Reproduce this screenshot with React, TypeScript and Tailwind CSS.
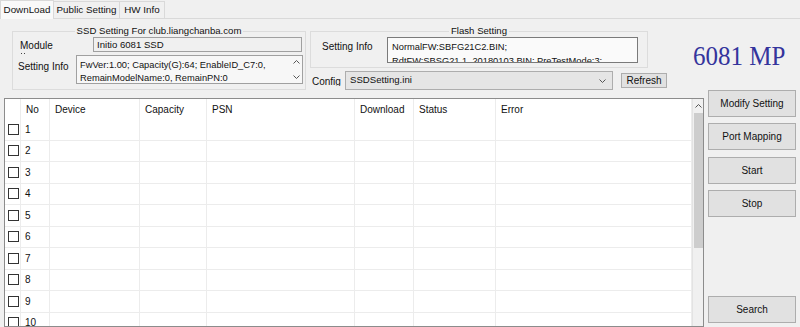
import React from "react";

const cols = "grid grid-cols-[16px_29px_90px_67px_148px_59px_82px_196px]";

function ChevronUp({ className = "" }: { className?: string }) {
  return (
    <svg width="7" height="4" viewBox="0 0 7 4" className={className}>
      <path d="M0.5 3.5 L3.5 0.5 L6.5 3.5" fill="none" stroke="#555" strokeWidth="1" />
    </svg>
  );
}
function ChevronDown({ className = "" }: { className?: string }) {
  return (
    <svg width="7" height="4" viewBox="0 0 7 4" className={className}>
      <path d="M0.5 0.5 L3.5 3.5 L6.5 0.5" fill="none" stroke="#555" strokeWidth="1" />
    </svg>
  );
}

function Btn({ label, className = "" }: { label: string; className?: string }) {
  return (
    <div
      className={
        "h-[27px] w-[88px] flex items-center justify-center bg-[#e1e1e1] border border-[#adadad] text-[10px] text-[#111] " +
        className
      }
    >
      {label}
    </div>
  );
}

export default function App() {
  const headers = ["", "No", "Device", "Capacity", "PSN", "Download", "Status", "Error"];
  const rows = [1, 2, 3, 4, 5, 6, 7, 8, 9, 10];
  return (
    <div
      className="w-[800px] h-[327px] overflow-hidden bg-[#f0f0f0] text-[10px] text-[#111] flex flex-col"
      style={{ fontFamily: '"Liberation Sans", Arial, sans-serif' }}
    >
      {/* Tabs */}
      <div className="h-[19px] flex items-end border-b border-[#d9d9d9] shrink-0">
        <div className="h-[19px] w-[54px] bg-[#f9f9f9] border border-b-0 border-[#d9d9d9] flex items-center justify-center text-[9.8px] -mb-px">
          DownLoad
        </div>
        <div className="h-[17px] w-[66px] border border-b-0 border-l-0 border-[#d9d9d9] flex items-center justify-center text-[9.8px]">
          Public Setting
        </div>
        <div className="h-[17px] w-[45px] border border-b-0 border-l-0 border-[#d9d9d9] flex items-center justify-center text-[9.8px]">
          HW Info
        </div>
      </div>

      {/* Top area */}
      <div className="h-[79px] flex items-start shrink-0">
        {/* SSD group */}
        <fieldset className="ml-[12px] mt-[6px] w-[294px] h-[65px] border border-[#dcdcdc]">
          <legend className="mx-auto px-[2px] leading-[12px] text-[9.6px]">SSD Setting For club.liangchanba.com</legend>
          <div className="flex items-start">
            <div className="w-[80px] pl-[7px] pt-[3px] leading-[12px]">
              <div>Module</div>
              <div className="flex gap-[2px] pl-[1px] pt-[1px]">
                <span className="w-[1px] h-[1px] bg-[#444]" />
                <span className="w-[1px] h-[1px] bg-[#444]" />
              </div>
            </div>
            <div className="w-[209px] h-[15px] border border-[#a0a0a0] bg-[#f0f0f0] pl-[3px] leading-[13px] text-[9.6px]">
              Initio 6081 SSD
            </div>
          </div>
          <div className="flex items-start mt-[1px]">
            <div className="w-[63px] pl-[5px] pt-[4px]">Setting Info</div>
            <div className="w-[227px] h-[29px] border border-[#a0a0a0] bg-[#f7f7f7] flex overflow-hidden">
              <div className="flex-1 pl-[3px] pt-[3px] leading-[13px] text-[9.3px] whitespace-nowrap overflow-hidden">
                <div>FwVer:1.00; Capacity(G):64; EnableID_C7:0,</div>
                <div>RemainModelName:0, RemainPN:0</div>
              </div>
              <div className="w-[12px] flex flex-col items-center justify-between py-[4px]">
                <ChevronUp />
                <ChevronDown />
              </div>
            </div>
          </div>
        </fieldset>

        {/* Middle column */}
        <div className="ml-[4px] w-[357px] flex flex-col">
          <fieldset className="mt-[6px] w-[338px] h-[43px] border border-[#dcdcdc]">
            <legend className="mx-auto px-[2px] leading-[12px] text-[9.6px]">Flash Setting</legend>
            <div className="flex items-start">
              <div className="w-[76px] pl-[11px] pt-[2px]">Setting Info</div>
              <div className="w-[251px] h-[26px] border border-[#7a7a7a] bg-[#fafafa] pl-[4px] pt-[2px] leading-[14px] text-[9.3px] overflow-hidden whitespace-nowrap">
                <div>NormalFW:SBFG21C2.BIN;</div>
                <div>RdtFW:SBSG21.1_20180103.BIN; PreTestMode:3;</div>
              </div>
            </div>
          </fieldset>
          <div className="mt-[3px] flex items-center">
            <div className="w-[35px] pl-[2px] h-[10px] overflow-hidden leading-[11px]">Config</div>
            <div className="w-[268px] h-[19px] border border-[#adadad] bg-[#e5e5e5] flex items-center pl-[4px] pr-[6px] text-[9.6px]">
              <span className="flex-1">SSDSetting.ini</span>
              <ChevronDown />
            </div>
            <div className="ml-[8px] w-[46px] h-[15px] border border-[#adadad] bg-[#e1e1e1] flex items-center justify-center">
              Refresh
            </div>
          </div>
        </div>

        {/* Title */}
        <div
          className="ml-[26px] mt-[23px] text-[25px] leading-none text-[#34349c] whitespace-nowrap scale-y-[1.08] origin-top"
          style={{ fontFamily: '"Liberation Serif", "Times New Roman", serif' }}
        >
          6081 MP
        </div>
      </div>

      {/* Bottom area */}
      <div className="flex-1 flex items-start">
        <div className="ml-[4px] w-[700px] h-[229px] border border-[#8c8c8c] bg-white flex">
          <div className="w-[687px] overflow-hidden">
            <div className={cols + " h-[20px]"}>
              {headers.map((h, i) => (
                <div key={i} className="border-r border-[#ececec] pl-[5px] flex items-center">
                  {h}
                </div>
              ))}
            </div>
            {rows.map((r) => (
              <div key={r} className={cols + " h-[21.5px]"}>
                <div className="border-r border-b border-[#ececec] flex items-center pl-[3px]">
                  <div className="w-[11px] h-[11px] border border-[#333] bg-white" />
                </div>
                <div className="border-r border-b border-[#ececec] flex items-center pl-[4px]">{r}</div>
                {[0, 1, 2, 3, 4, 5].map((c) => (
                  <div key={c} className="border-r border-b border-[#ececec]" />
                ))}
              </div>
            ))}
          </div>
          <div className="flex-1 bg-[#f0f0f0] border-l border-[#e3e3e3] flex flex-col items-center">
            <div className="h-[14px] flex items-center">
              <ChevronUp />
            </div>
            <div className="w-[9px] h-[135px] bg-[#cdcdcd]" />
          </div>
        </div>

        <div className="ml-[4px] -mt-[8px] h-[237px] pb-[4px] flex flex-col gap-[6px]">
          <Btn label="Modify Setting" />
          <Btn label="Port Mapping" />
          <Btn label="Start" className="mt-[0.5px]" />
          <Btn label="Stop" className="mt-[0.5px]" />
          <Btn label="Search" className="mt-auto" />
        </div>
      </div>
    </div>
  );
}
